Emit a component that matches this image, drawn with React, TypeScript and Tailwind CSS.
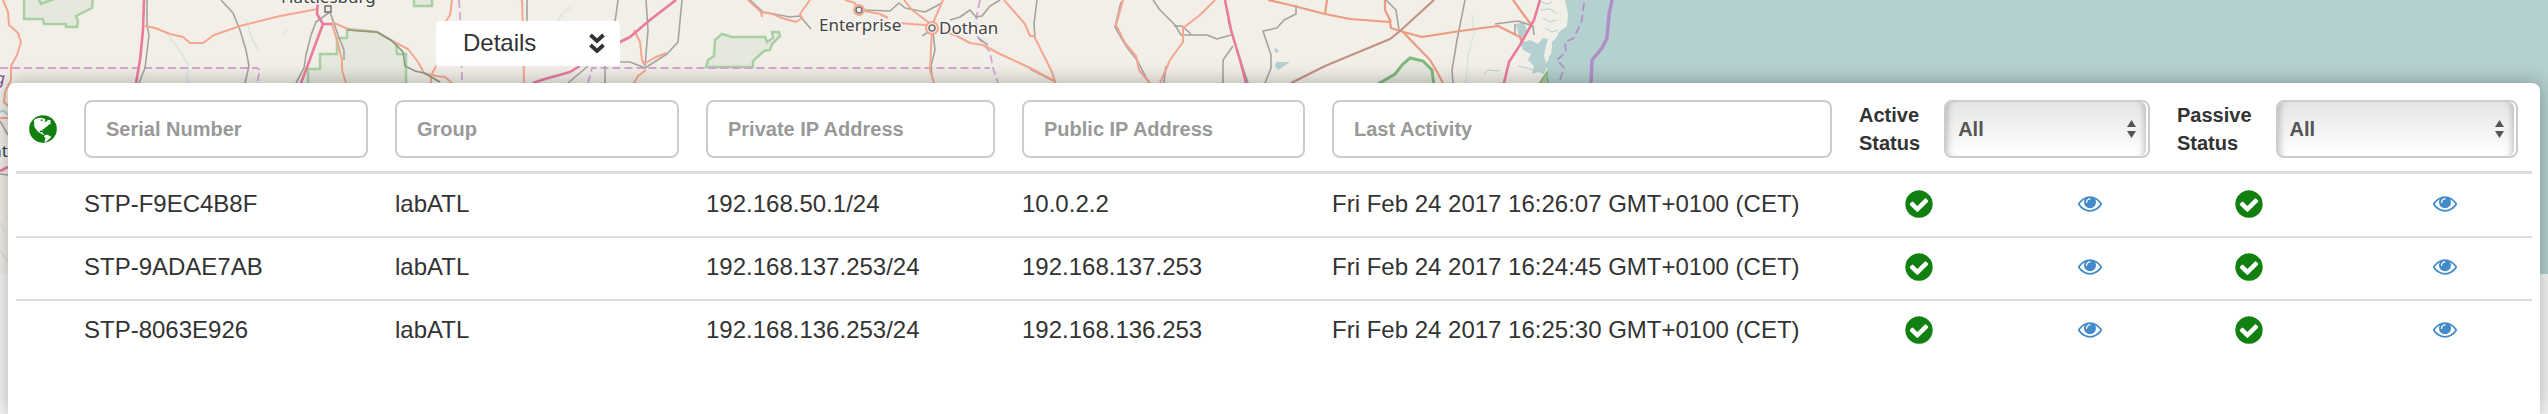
import React from "react";

const devices = [
  {
    serial: "STP-F9EC4B8F",
    group: "labATL",
    privateIp: "192.168.50.1/24",
    publicIp: "10.0.2.2",
    lastActivity: "Fri Feb 24 2017 16:26:07 GMT+0100 (CET)",
  },
  {
    serial: "STP-9ADAE7AB",
    group: "labATL",
    privateIp: "192.168.137.253/24",
    publicIp: "192.168.137.253",
    lastActivity: "Fri Feb 24 2017 16:24:45 GMT+0100 (CET)",
  },
  {
    serial: "STP-8063E926",
    group: "labATL",
    privateIp: "192.168.136.253/24",
    publicIp: "192.168.136.253",
    lastActivity: "Fri Feb 24 2017 16:25:30 GMT+0100 (CET)",
  },
];

const textFilters = [
  "Serial Number",
  "Group",
  "Private IP Address",
  "Public IP Address",
  "Last Activity",
];

function MapBackground() {
  return (
    <svg
      className="absolute inset-x-0 top-0 h-[274px] w-full"
      viewBox="0 0 2548 274"
      preserveAspectRatio="xMinYMin slice"
      aria-hidden="true"
    >
      <rect width="2548" height="274" fill="#f2efe9" />

      {/* sea and lakes */}
      <g fill="#b5d0d0">
        <path d="M1565 0L1568 14L1567 26L1560 31L1556 38L1552 42L1548 50L1549 58L1546 64L1548 72L1545 83V274H2548V0Z" />
        <path d="M1516 24L1524 22L1527 30L1524 40L1519 36ZM1521 43L1530 40L1538 44L1543 38L1548 39L1546 46L1544 56L1547 66L1544 74L1538 72L1532 74L1534 66L1528 60L1531 54L1523 50Z" />
        <path d="M1276 62L1290 62L1283 67L1278 70L1275 66ZM1274 50L1276 48L1279 51L1276 53Z" />
      </g>
      <path d="M1552 42L1548 50L1547 58L1551 54L1552 46Z" fill="#f2efe9" />
      <path
        d="M1541 2L1547 4L1552 2M1541 10L1550 9L1556 13M1543 18L1550 22L1556 20M1545 28L1552 32L1558 30M1484 74L1488 70L1500 71M1518 66L1526 68L1533 70"
        fill="none"
        stroke="#b5d0d0"
        strokeWidth="1"
      />
      <g fill="none" stroke="#dbe4e1" strokeWidth="1.5">
        <path d="M246 20L251 36L258 50M283 36L287 28M520 0L524 5M553 28L562 14L572 6M164 30L178 48L188 64L187 83M1472 14L1474 34L1468 55L1466 83M0 222L4 232M0 250L8 262" />
      </g>

      {/* forests */}
      <g fill="#e5e8dc" stroke="#a9d0a4" strokeWidth="2.5">
        <path d="M24 -3V19H43L44 24H66V27H77L78 21L76 16L84 12L92 8L93 -3ZM38 -3L41 4L54 -1" />
        <path d="M347 29V38H337V54H320V69H308V86H406V54H397L396 43L377 32Z" />
        <path d="M414 -3V6H432V-3Z" />
        <path d="M706 67L708 60L714 56L715 40L722 34L732 37H765L767 42L773 38L772 32H779L780 36L772 44L770 50L764 51L753 61V67Z" />
      </g>
      <path
        d="M1378 84L1395 74L1403 64L1410 58L1423 61L1432 70L1434 86"
        fill="#e5e8dc"
        stroke="#7fb97b"
        strokeWidth="3"
      />
      <path d="M1539 84L1547 72L1548 84Z" fill="#a9c9a4" stroke="#7fb97b" strokeWidth="1.5" />

      {/* administrative boundaries */}
      <g fill="none" stroke="#d3a6d6" strokeWidth="1.8" strokeDasharray="8 4">
        <path d="M0 68H257L260 70L257 83M459 0L461 30L462 83M588 83L592 68H990M980 0L976 20L978 37L990 52L993 68L998 83" />
        <path d="M1584 3L1582 20L1574 38L1565 42L1566 52L1557 60L1564 68L1560 80" stroke="#b293c6" />
      </g>
      <path
        d="M1612 0L1609 15L1607 38L1602 48L1592 60L1591 83"
        fill="none"
        stroke="#b08fc6"
        strokeWidth="3.5"
      />

      {/* railways */}
      <g fill="none" stroke="#a5a39f" strokeWidth="1.6" strokeLinejoin="round">
        <path d="M147 0L147 25L149 35L145 68L139 83M221 0L233 13L240 30L246 50L249 66L245 83" />
        <path d="M330 12L316 22L311 35L306 55L304 68L296 83M330 12L338 35L344 50V60" />
        <path d="M527 0V22M618 0L615 22M646 0L648 30L645 66M682 0L678 42L667 54L645 68L630 62H618M588 66L568 83M605 66V83" />
        <path d="M750 0L763 12L790 17L800 16L811 29M864 10L890 11L899 3L905 8L925 12L942 3M933 32L935 50L931 66L932 75M922 36L930 31M950 20L960 17L970 10L976 17L982 16L990 6L1000 0M978 38L988 45" />
        <path d="M1037 0L1034 24L1035 38M1121 2L1115 27L1126 46L1137 60L1149 83M1030 69L1056 82" />
        <path d="M1153 0L1160 10L1175 25L1181 35H1207L1217 39L1231 35M1174 26H1182L1191 34M1166 66L1164 83" />
        <path d="M1228 20L1237 50L1248 83M1233 46L1223 60L1223 83M1296 5V14L1284 20L1277 28L1263 31L1271 55V68L1265 83" />
        <path d="M1386 0L1396 10L1399 30M1465 0L1457 40L1452 70L1453 83M1495 24L1518 21L1533 26L1534 35M1515 24L1515 34" />
        <path d="M0 121L8 135M0 174L8 175" />
      </g>

      {/* primary roads */}
      <g fill="none" stroke="#f4a78f" strokeWidth="2" strokeLinejoin="round">
        <path d="M3 0L8 12L9 25L18 33L21 42L17 55L11 66V80L5 92L4 102L8 106M0 118H8" />
        <path d="M145 26L155 28L170 34L183 37L190 43H203L214 35L240 26L280 16L318 9" />
        <path d="M332 24L337 40L342 60V70L346 83M332 22L350 30L377 32L396 43L408 49L418 62L424 73L436 76L445 77L452 83M452 0L450 15L444 24M436 66L431 76V83" />
        <path d="M522 0L523 30L524 83M634 30L640 42L642 60L644 64L654 58L666 53M646 70L638 76L634 83" />
        <path d="M748 0L761 12L773 14L782 18L796 22L802 18L800 14L810 0M761 12L762 17M845 0L855 3L859 10L880 14L888 18M904 0L912 10L932 25L943 0M898 23L925 25L932 28L930 70L934 83M934 28L957 36L970 43L983 45L1000 54L1030 68L1056 82" />
        <path d="M1004 0L1025 24L1030 36H1034L1052 72L1055 82M1123 0L1116 25L1125 43L1136 56L1139 70L1150 83M1215 0L1200 15L1183 28V42L1170 60L1160 83" />
      </g>
      <g fill="none" stroke="#ec9a80" strokeWidth="2.2" strokeLinejoin="round">
        <path d="M1268 0L1290 5L1325 14L1350 19L1390 22L1391 28L1400 31L1422 37L1460 31L1498 26L1520 37L1522 42M1327 0L1325 14M1385 0V10L1391 22M1402 31L1430 60L1436 70L1443 83M1513 0L1532 26" />
      </g>
      <path
        d="M1434 0L1400 31L1390 39L1325 66L1291 83"
        fill="none"
        stroke="#c39384"
        strokeWidth="2.2"
      />
      <path
        d="M347 30L377 32L392 41L403 52L405 66L415 71L424 73L440 82"
        fill="none"
        stroke="#8a9a80"
        strokeWidth="1.6"
      />

      {/* motorways */}
      <g fill="none" stroke="#e97b9c" strokeWidth="2.6" strokeLinejoin="round">
        <path d="M144 0L143 30L140 60L136 83M318 0L317 14L323 24H332M323 24L314 48L309 62L301 83" />
        <path d="M676 0L650 20L630 37L618 43M580 66L570 72L545 79L533 83M1225 0L1231 30L1240 60L1246 83" />
        <path d="M1540 0L1534 20L1520 45L1509 62L1504 83M0 171L8 167" />
      </g>

      {/* towns */}
      <path d="M0 112Q4 109 8 115" fill="none" stroke="#b5d0d0" strokeWidth="2" />
      <g fill="#f2efe9" stroke="#777" strokeWidth="1.6">
        <rect x="325" y="6" width="6" height="6" />
        <circle cx="932" cy="28" r="6" stroke="#f4a78f" strokeWidth="2" />
        <circle cx="859" cy="10" r="5" stroke="#f4a78f" strokeWidth="2" />
        <circle cx="859" cy="10" r="3" />
        <circle cx="932" cy="28" r="3" />
      </g>
      <g
        className="font-['Noto_Sans',sans-serif] text-[17px]"
        fill="#444"
        stroke="#f7f5f1"
        strokeWidth="3"
        paintOrder="stroke"
      >
        <text x="281" y="3">Hattiesburg</text>
        <text x="819" y="31">Enterprise</text>
        <text x="939" y="34">Dothan</text>
        <text x="8" y="157" textAnchor="end">nt</text>
        <text x="5" y="84" textAnchor="end" fill="#7a5590" fontStyle="italic">g</text>
      </g>
    </svg>
  );
}

function GlobeIcon() {
  return (
    <svg className="block size-7" viewBox="0 0 84 84" aria-label="Show on map" role="img">
      <circle cx="42" cy="42" r="41.5" fill="#118011" />
      <path
        d="M14 16L20 11L27 10L33 8L40 9L48 12L50 16L46 19L50 22L54 17L60 14L66 17L63 23L66 26L59 29L55 34L50 37L46 41L41 43L40 48L36 46L32 48L34 52L40 51L42 56L47 58L43 60L37 56L29 52L23 46L18 38L15 31L16 24Z"
        fill="#fff"
      />
      <path
        d="M48 60L55 59L61 62L66 65L64 70L58 74L54 79L48 81L47 75L50 70L45 65Z"
        fill="#fff"
      />
      <path d="M36 13L41 14L39 19L35 17Z" fill="#118011" />
    </svg>
  );
}

function CheckIcon() {
  return (
    <svg className="mx-auto block size-8" viewBox="0 0 1792 1792" fill="#118011" role="img" aria-label="OK">
      <path d="M1412 734q0-28-18-46l-91-90q-19-19-45-19t-45 19l-408 407-226-226q-19-19-45-19t-45 19l-91 90q-18 18-18 46 0 27 18 45l362 362q19 19 45 19 27 0 46-19l543-543q18-18 18-45zm252 162q0 209-103 385.5t-279.5 279.5-385.5 103-385.5-103-279.5-279.5-103-385.5 103-385.5 279.5-279.5 385.5-103 385.5 103 279.5 279.5 103 385.5z" />
    </svg>
  );
}

function EyeLink({ label }: { label: string }) {
  return (
    <a href="#details" aria-label={label} className="mx-auto block w-6 text-[#428bca]">
      <svg className="block size-6" viewBox="0 64 1792 1792" fill="currentColor" aria-hidden="true">
        <path d="M1664 960q-152-236-381-353 61 104 61 225 0 185-131.5 316.5t-316.5 131.5-316.5-131.5-131.5-316.5q0-121 61-225-229 117-381 353 133 205 333.5 326.5t434.5 121.5 434.5-121.5 333.5-326.5zm-720-384q0-20-14-34t-34-14q-125 0-214.5 89.5t-89.5 214.5q0 20 14 34t34 14 34-14 14-34q0-86 61-147t147-61q20 0 34-14t14-34zm848 384q0 34-20 69-140 230-376.5 368.5t-499.5 138.5-499.5-139-376.5-368q-20-35-20-69t20-69q140-229 376.5-368t499.5-139 499.5 139 376.5 368q20 35 20 69z" />
      </svg>
    </a>
  );
}

function StatusFilter({ id, label }: { id: string; label: string }) {
  return (
    <div className="flex items-center gap-6">
      <label htmlFor={id} className="w-min text-left text-xl leading-7 font-bold">
        {label}
      </label>
      <div className="relative h-[58px] flex-1 rounded-lg border-2 border-[#ccc] bg-white pr-[2px]">
        <select
          id={id}
          className="block h-full w-full appearance-none rounded-md bg-linear-to-b from-[#e5e5e5] to-white pl-3 text-xl font-bold text-[#555] shadow-[inset_8px_0_6px_-6px_rgba(0,0,0,0.22),inset_-8px_0_6px_-6px_rgba(0,0,0,0.22)] outline-none"
        >
          <option>All</option>
        </select>
        <svg
          className="pointer-events-none absolute top-[18px] right-3 h-[18px] w-[9px]"
          viewBox="0 0 9 18"
          fill="#555"
          aria-hidden="true"
        >
          <path d="M0 7H9L4.5 0ZM0 11H9L4.5 18Z" />
        </svg>
      </div>
    </div>
  );
}

export default function App() {
  return (
    <div className="relative flex min-h-screen flex-col overflow-hidden bg-[#f5f5f5] font-['Liberation_Sans',Arial,sans-serif] text-2xl leading-8 text-[#333]">
      <MapBackground />

      <div className="relative pt-[21px] pb-[17px] pl-[436px]">
        <button
          type="button"
          className="flex h-[45px] w-[184px] items-center justify-between rounded bg-white pr-[15px] pb-[2px] pl-[27px]"
        >
          Details
          <svg
            className="h-5 w-4"
            viewBox="0 0 16 20"
            fill="none"
            stroke="#333"
            strokeWidth="3.8"
            aria-hidden="true"
          >
            <path d="M1.5 2L8 8L14.5 2M1.5 12L8 18L14.5 12" />
          </svg>
        </button>
      </div>

      <main className="relative mx-2 flex-1 rounded-t-lg bg-white px-2 shadow-[0_0_20px_rgba(0,0,0,0.3)]">
        <table className="w-full table-fixed border-separate border-spacing-0 text-left">
          <colgroup>
            <col className="w-[55px]" />
            <col className="w-[311px]" />
            <col className="w-[311px]" />
            <col className="w-[316px]" />
            <col className="w-[310px]" />
            <col className="w-[527px]" />
            <col className="w-[146px]" />
            <col className="w-[172px]" />
            <col className="w-[170px]" />
            <col className="w-[198px]" />
          </colgroup>
          <thead>
            <tr className="[&>th]:border-b-3 [&>th]:border-[#ddd] [&>th]:pt-[17px] [&>th]:pb-[13px]">
              <th className="pl-[13px]">
                <GlobeIcon />
              </th>
              {textFilters.map((name) => (
                <th key={name} className="pr-[14px] pl-[13px]">
                  <input
                    type="text"
                    aria-label={name}
                    placeholder={name}
                    className="block h-[58px] w-full rounded-lg border-2 border-[#ccc] bg-white px-5 text-xl font-bold placeholder:text-[#999] placeholder:opacity-100"
                  />
                </th>
              ))}
              <th colSpan={2} className="pr-[14px] pl-[13px]">
                <StatusFilter id="active-status" label="Active Status" />
              </th>
              <th colSpan={2} className="pr-[14px] pl-[13px]">
                <StatusFilter id="passive-status" label="Passive Status" />
              </th>
            </tr>
          </thead>
          <tbody className="[&_td]:pb-[3px] [&>tr+tr>td]:border-t-2 [&>tr+tr>td]:border-[#ddd]">
            {devices.map((d) => (
              <tr key={d.serial} className="h-[63px] first:h-[62px]">
                <td />
                <td className="pl-[13px]">{d.serial}</td>
                <td className="pl-[13px]">{d.group}</td>
                <td className="pl-[13px]">{d.privateIp}</td>
                <td className="pl-[13px]">{d.publicIp}</td>
                <td className="pl-[13px]">{d.lastActivity}</td>
                <td>
                  <CheckIcon />
                </td>
                <td className="pl-6">
                  <EyeLink label={`View active status of ${d.serial}`} />
                </td>
                <td>
                  <CheckIcon />
                </td>
                <td className="pl-6">
                  <EyeLink label={`View passive status of ${d.serial}`} />
                </td>
              </tr>
            ))}
          </tbody>
        </table>
      </main>
    </div>
  );
}
